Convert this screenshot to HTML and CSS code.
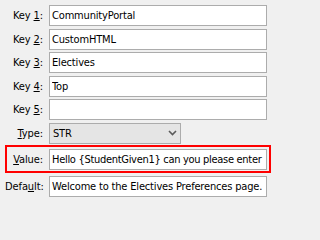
FILE: index.html
```html
<!DOCTYPE html>
<html>
<head>
<meta charset="utf-8">
<link rel="stylesheet" href="styles.css">
</head>
<body>
<div class="form">
  <div class="row"><label class="lbl">Key <u>1</u>:</label><input class="field" value="CommunityPortal"></div>
  <div class="row"><label class="lbl">Key <u>2</u>:</label><input class="field" value="CustomHTML"></div>
  <div class="row"><label class="lbl">Key <u>3</u>:</label><input class="field" value="Electives"></div>
  <div class="row"><label class="lbl">Key <u>4</u>:</label><input class="field" value="Top"></div>
  <div class="row"><label class="lbl">Key <u>5</u>:</label><input class="field" value=""></div>
  <div class="row"><label class="lbl"><u>T</u>ype:</label>
    <div class="combo"><span class="combo-text">STR</span>
      <svg class="chev" width="9" height="6" viewBox="0 0 9 6"><path d="M1 1 L4.5 4.5 L8 1" fill="none" stroke="#5a5a5a" stroke-width="1.6"/></svg>
    </div>
  </div>
  <div class="row highlight"><label class="lbl"><u>V</u>alue:</label><input class="field field-tight" value="Hello {StudentGiven1} can you please enter your preferences"></div>
  <div class="row last"><label class="lbl">Defa<u>u</u>lt:</label><input class="field" value="Welcome to the Electives Preferences page."></div>
</div>
</body>
</html>
```

FILE: styles.css
```css
html, body {
  margin: 0;
  padding: 0;
  background: #f0f0f0;
}
body {
  font-family: "DejaVu Sans Condensed", "Liberation Sans", sans-serif;
  font-size: 11px;
  color: #000;
}
.form {
  display: flex;
  flex-direction: column;
  gap: 2.5px;
  padding: 5px 0 0 5px;
}
.row {
  display: grid;
  grid-template-columns: 38px 218px;
  column-gap: 6px;
  align-items: center;
  height: 21px;
}
.lbl {
  text-align: right;
  white-space: nowrap;
  line-height: 21px;
  letter-spacing: -0.1px;
}
.lbl u {
  text-decoration-thickness: 1px;
  text-underline-offset: 1px;
}
.field {
  box-sizing: border-box;
  height: 21px;
  width: 218px;
  margin: 0;
  border: 1px solid #acacac;
  background: #fff;
  padding: 0 2px;
  font: inherit;
  letter-spacing: -0.17px;
  color: #000;
  outline: none;
}
.field-tight {
  letter-spacing: -0.3px;
}
.combo {
  box-sizing: border-box;
  height: 21px;
  width: 132px;
  border: 1px solid #acacac;
  background: #e5e5e5;
  display: flex;
  align-items: center;
  justify-content: space-between;
  padding: 0 3px 0 3px;
  letter-spacing: -0.17px;
}
.chev {
  display: block;
}
.highlight {
  box-sizing: border-box;
  width: 266px;
  height: 28px;
  border: 2px solid #ff0000;
  grid-template-columns: 36px 218px;
  padding-top: 1px;
  margin-top: -1px;
  align-items: start;
}
.highlight .lbl,
.highlight .field {
  margin-top: 1px;
}
.last {
  margin-top: 0.5px;
}
```
